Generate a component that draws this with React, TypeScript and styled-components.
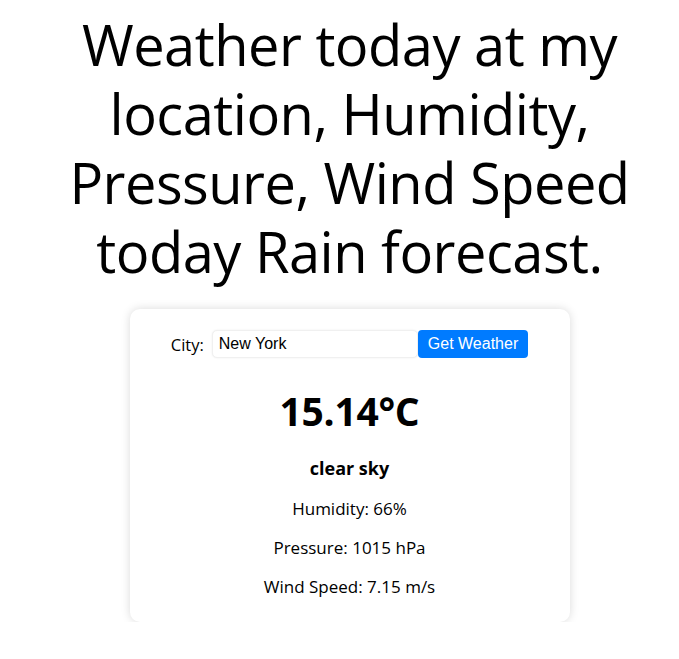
import React, { useState } from 'react';
import styled, { createGlobalStyle } from 'styled-components';

const GlobalStyle = createGlobalStyle`
    body {
        margin: 0;
        background: #ffffff;
        font-family: "Open Sans", "Noto Sans", sans-serif;
        color: #000000;
    }
`;

const StyledPage = styled.div`
    display: flex;
    flex-direction: column;
    align-items: center;
    padding-left: 20px;
`;

const StyledTitle = styled.h1`
    max-width: 600px;
    margin: 10px 0 23px;
    font-size: 56px;
    font-weight: 400;
    line-height: 69px;
    text-align: center;
    letter-spacing: -0.5px;
`;

const StyledCard = styled.div`
    width: 440px;
    box-sizing: border-box;
    padding: 21px 20px 11px;
    display: flex;
    flex-direction: column;
    align-items: center;
    background: #ffffff;
    border-radius: 10px;
    box-shadow: 0 0 10px rgba(0, 0, 0, 0.15);
`;

const StyledForm = styled.form`
    display: flex;
    align-items: center;
    margin-bottom: 26px;
`;

const StyledLabel = styled.label`
    font-size: 16.5px;
    margin-right: 8px;
`;

const StyledInput = styled.input`
    width: 206px;
    height: 28px;
    box-sizing: border-box;
    padding: 0 6px;
    border: 1px solid #f0f0f0;
    border-radius: 5px;
    box-shadow: 0 0 2px rgba(0, 0, 0, 0.08);
    font-family: "Liberation Sans", Arial, sans-serif;
    font-size: 16px;
    outline: none;
`;

const StyledButton = styled.button`
    height: 28px;
    padding: 0 10px;
    border: none;
    border-radius: 4px;
    background: #007bff;
    color: #ffffff;
    font-family: "Liberation Sans", Arial, sans-serif;
    font-size: 16px;
    cursor: pointer;
`;

const StyledTemp = styled.h2`
    margin: 0 0 17px;
    font-size: 39px;
    font-weight: 700;
    letter-spacing: -0.3px;
`;

const StyledDescription = styled.p<{ bold?: boolean }>`
    margin: 0 0 ${props => (props.bold ? '11px' : '10px')};
    font-size: ${props => (props.bold ? '18px' : '17px')};
    font-weight: ${props => (props.bold ? 700 : 400)};
    line-height: 29px;
`;

const App: React.FC = () => {
    const [city, setCity] = useState('New York');

    const weather = {
        temp: 15.14,
        description: 'clear sky',
        humidity: 66,
        pressure: 1015,
        wind: 7.15,
    };

    return (
        <>
            <GlobalStyle />
            <StyledPage>
                <StyledTitle>Weather today at my location, Humidity, Pressure, Wind Speed today Rain forecast.</StyledTitle>
                <StyledCard>
                    <StyledForm onSubmit={e => e.preventDefault()}>
                        <StyledLabel htmlFor="city">City:</StyledLabel>
                        <StyledInput id="city" value={city} onChange={e => setCity(e.target.value)} />
                        <StyledButton type="submit">Get Weather</StyledButton>
                    </StyledForm>
                    <StyledTemp>{weather.temp}°C</StyledTemp>
                    <StyledDescription bold>{weather.description}</StyledDescription>
                    <StyledDescription>Humidity: {weather.humidity}%</StyledDescription>
                    <StyledDescription>Pressure: {weather.pressure} hPa</StyledDescription>
                    <StyledDescription>Wind Speed: {weather.wind} m/s</StyledDescription>
                </StyledCard>
            </StyledPage>
        </>
    );
};

export default App;
